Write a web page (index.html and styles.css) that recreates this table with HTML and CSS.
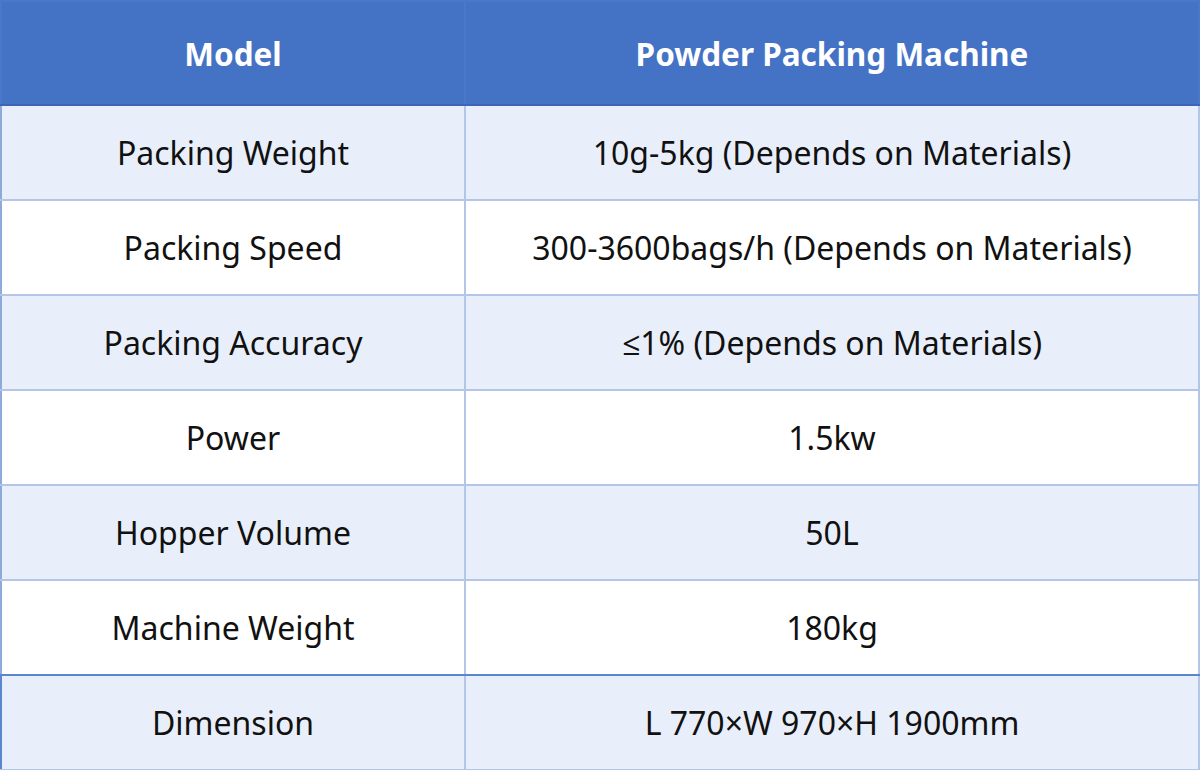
FILE: index.html
```html
<!DOCTYPE html>
<html>
<head>
<meta charset="utf-8">
<link rel="stylesheet" href="styles.css">
</head>
<body>
<table class="spec">
  <thead>
    <tr><th class="c1">Model</th><th class="c2">Powder Packing Machine</th></tr>
  </thead>
  <tbody>
    <tr class="alt"><td>Packing Weight</td><td>10g-5kg (Depends on Materials)</td></tr>
    <tr><td>Packing Speed</td><td>300-3600bags/h (Depends on Materials)</td></tr>
    <tr class="alt"><td>Packing Accuracy</td><td>≤1% (Depends on Materials)</td></tr>
    <tr><td>Power</td><td>1.5kw</td></tr>
    <tr class="alt"><td>Hopper Volume</td><td>50L</td></tr>
    <tr class="pre-last"><td>Machine Weight</td><td>180kg</td></tr>
    <tr class="alt last"><td>Dimension</td><td>L 770×W 970×H 1900mm</td></tr>
  </tbody>
</table>
</body>
</html>
```
FILE: styles.css
```css
html, body {
  margin: 0;
  padding: 0;
  background: #ffffff;
}
.spec {
  width: 1200px;
  height: 770px;
  border-collapse: collapse;
  table-layout: fixed;
  font-family: "Noto Sans", "Open Sans", sans-serif;
  color: #111111;
}
.spec th {
  background: #4472c4;
  color: #ffffff;
  font-weight: 700;
  font-size: 31.5px;
  height: 102px;
  border: 2px solid #4a78c8;
  border-bottom: 2px solid #3b66b5;
  padding: 0;
}
.spec .c1 { width: 462px; }
.spec th + th { border-left: 2px solid #b4c6e7; }
.spec td {
  text-align: center;
  font-size: 32px;
  height: 93px;
  border: 2px solid #b4c6e7;
  padding: 0;
  background: #ffffff;
}
.spec tr.alt td { background: #e9effa; }
.spec tr.pre-last td { border-bottom: 2px solid #5b85cf; }
.spec tr.last td:first-child { border-left: 2px solid #5b85cf; }
.spec tbody tr td:first-child { border-left-color: #8eaadb; }
```
